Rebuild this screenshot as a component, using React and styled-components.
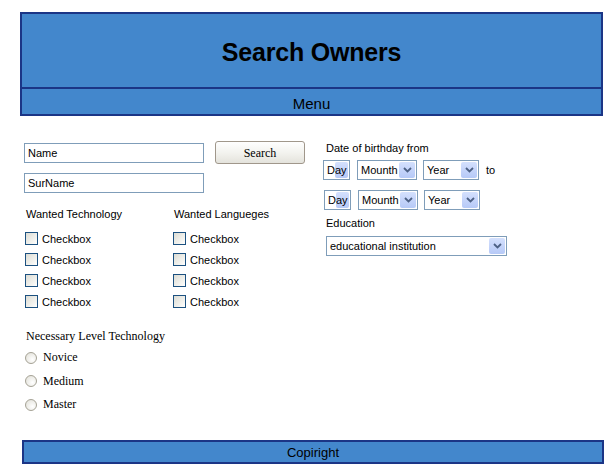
import React from "react";
import styled, { createGlobalStyle } from "styled-components";

const GlobalStyle = createGlobalStyle`
  html, body { margin: 0; padding: 0; background: #ffffff; }
  body { font-family: "Liberation Sans", Arial, sans-serif; color: #000; }
  * { box-sizing: border-box; }
`;

const Page = styled.div`
  width: 608px;
  padding: 12px 0 0 20px;
`;

const Header = styled.header`
  width: 583px;
  border: 2px solid #1b3586;
  background: #4387cc;
`;

const TitleBar = styled.div`
  height: 75px;
  display: flex;
  align-items: center;
  justify-content: center;
  padding-top: 3px;
  border-bottom: 2px solid #1b3586;
`;

const Title = styled.h1`
  margin: 0;
  font-family: "Liberation Sans", Arial, sans-serif;
  font-size: 25px;
  font-weight: bold;
  letter-spacing: -0.2px;
`;

const MenuBar = styled.nav`
  height: 25px;
  display: flex;
  align-items: center;
  justify-content: center;
  font-size: 15px;
  padding-top: 3px;
`;

const Form = styled.form`
  display: flex;
  padding-top: 25px;
  height: 324px;
`;

const LeftCol = styled.div`
  width: 303px;
  padding-left: 4px;
`;

const RightCol = styled.div`
  display: flex;
  flex-direction: column;
`;

const TopRow = styled.div`
  display: flex;
  align-items: center;
  height: 23px;
`;

const TextInput = styled.input`
  width: 180px;
  height: 20px;
  border: 1px solid #7f9db9;
  padding: 0 3px;
  font-family: "Liberation Sans", Arial, sans-serif;
  font-size: 11px;
  color: #000;
  background: #fff;
  outline: none;
  margin-top: ${(p) => p.$mt || 0}px;
  display: block;
`;

const Button = styled.button`
  margin-left: 11px;
  width: 90px;
  height: 23px;
  border: 1px solid #a0978b;
  border-radius: 3px;
  background: linear-gradient(#fefefe, #f3f3ef 50%, #e4e3dc);
  font-family: "Liberation Serif", "Times New Roman", serif;
  font-size: 12px;
  color: #000;
  padding: 1px 0 0;
`;

const Groups = styled.div`
  display: flex;
  margin-top: 14px;
`;

const Group = styled.div`
  width: ${(p) => p.$w || 148}px;
  padding-left: 1px;
`;

const GroupLabel = styled.div`
  font-size: 11px;
  line-height: 14px;
  padding-left: 1px;
  margin-bottom: 7px;
`;

const CheckRow = styled.label`
  display: flex;
  align-items: center;
  height: 21px;
  font-size: 11px;
  gap: 4px;
`;

const Check = styled.input.attrs({ type: "checkbox" })`
  appearance: none;
  margin: 0;
  width: 13px;
  height: 13px;
  border: 1px solid #1c5180;
  background: linear-gradient(135deg, #dcdcd4, #f4f4f0 70%, #ffffff);
`;

const SerifHeading = styled.div`
  margin-top: 17px;
  padding-left: 2px;
  font-family: "Liberation Serif", "Times New Roman", serif;
  font-size: 12px;
  line-height: 15px;
`;

const RadioList = styled.div`
  margin-top: 2px;
  padding-left: 1px;
`;

const RadioRow = styled.label`
  display: flex;
  align-items: center;
  height: 23.5px;
  gap: 6px;
  font-family: "Liberation Serif", "Times New Roman", serif;
  font-size: 12px;
`;

const Radio = styled.input.attrs({ type: "radio" })`
  appearance: none;
  margin: 0;
  width: 12px;
  height: 12px;
  border-radius: 50%;
  border: 1px solid #a5a295;
  background: radial-gradient(circle at 65% 65%, #ffffff, #e6e5de 80%);
`;

const SideLabel = styled.div`
  font-size: 11px;
  line-height: 14px;
  padding-left: 3px;
  margin-top: ${(p) => p.$mt || 0}px;
`;

const SelectRow = styled.div`
  display: flex;
  align-items: center;
  margin-top: ${(p) => p.$mt || 0}px;
  padding-left: ${(p) => p.$pl || 0}px;
`;

const SelectBox = styled.div`
  position: relative;
  width: ${(p) => p.$w}px;
  height: ${(p) => p.$h || 20}px;
  margin-right: ${(p) => p.$mr || 0}px;
  border: 1px solid #7f9db9;
  background: #fff;
  display: flex;
  align-items: center;
  font-size: 11px;
`;

const SelectText = styled.span`
  position: relative;
  z-index: 1;
  padding-left: 3px;
  white-space: nowrap;
`;

const ArrowBtn = styled.span`
  position: absolute;
  right: 1px;
  top: 1px;
  bottom: 1px;
  width: ${(p) => p.$w || 16}px;
  border-radius: 2px;
  background: linear-gradient(#d4e0fd, #b6c9f7);
  display: flex;
  align-items: center;
  justify-content: center;
`;

const ToText = styled.span`
  font-size: 11px;
  margin-left: 7px;
`;

const Footer = styled.footer`
  margin-left: 2px;
  width: 582px;
  height: 24px;
  border: 2px solid #1b3586;
  background: #4387cc;
  display: flex;
  align-items: center;
  justify-content: center;
  font-size: 13px;
  padding-top: 1px;
`;

const Chevron = () => (
  <svg width="9" height="6" viewBox="0 0 9 6">
    <path d="M1 1 L4.5 4.5 L8 1" fill="none" stroke="#4d6185" strokeWidth="1.8" />
  </svg>
);

const Select = ({ text, w, h, mr, aw, chevron = true }) => (
  <SelectBox $w={w} $h={h} $mr={mr}>
    <SelectText>{text}</SelectText>
    <ArrowBtn $w={aw}>{chevron && <Chevron />}</ArrowBtn>
  </SelectBox>
);

const techs = ["Checkbox", "Checkbox", "Checkbox", "Checkbox"];

export default function App() {
  return (
    <>
      <GlobalStyle />
      <Page>
        <Header>
          <TitleBar>
            <Title>Search Owners</Title>
          </TitleBar>
          <MenuBar>Menu</MenuBar>
        </Header>
        <Form onSubmit={(e) => e.preventDefault()}>
          <LeftCol>
            <TopRow>
              <TextInput defaultValue="Name" />
              <Button type="button">Search</Button>
            </TopRow>
            <TextInput defaultValue="SurName" $mt={9} />
            <Groups>
              <Group $w={148}>
                <GroupLabel>Wanted Technology</GroupLabel>
                {techs.map((t, i) => (
                  <CheckRow key={i}>
                    <Check />
                    {t}
                  </CheckRow>
                ))}
              </Group>
              <Group $w={130}>
                <GroupLabel>Wanted Langueges</GroupLabel>
                {techs.map((t, i) => (
                  <CheckRow key={i}>
                    <Check />
                    {t}
                  </CheckRow>
                ))}
              </Group>
            </Groups>
            <SerifHeading>Necessary Level Technology</SerifHeading>
            <RadioList>
              {["Novice", "Medium", "Master"].map((r) => (
                <RadioRow key={r}>
                  <Radio name="level" />
                  {r}
                </RadioRow>
              ))}
            </RadioList>
          </LeftCol>
          <RightCol>
            <SideLabel>Date of birthday from</SideLabel>
            <SelectRow $mt={5}>
              <Select text="Day" w={27} mr={7} aw={13} chevron={false} />
              <Select text="Mounth" w={60} mr={6} />
              <Select text="Year" w={56} />
              <ToText>to</ToText>
            </SelectRow>
            <SelectRow $mt={10} $pl={1}>
              <Select text="Day" w={27} mr={7} aw={13} chevron={false} />
              <Select text="Mounth" w={60} mr={6} />
              <Select text="Year" w={56} />
            </SelectRow>
            <SideLabel $mt={6}>Education</SideLabel>
            <SelectRow $mt={6} $pl={3}>
              <Select text="educational institution" w={181} h={20} />
            </SelectRow>
          </RightCol>
        </Form>
        <Footer>Copiright</Footer>
      </Page>
    </>
  );
}
